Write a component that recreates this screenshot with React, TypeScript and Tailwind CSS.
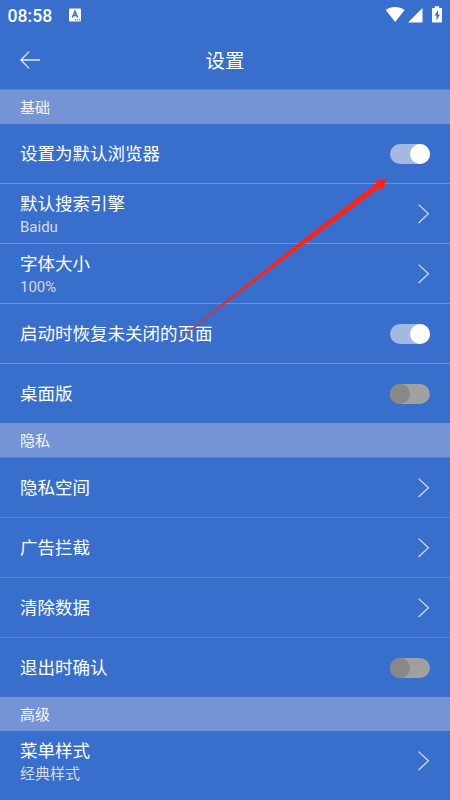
import React from "react";

type RowProps = { title: string; sub?: string; on?: boolean; last?: boolean; faint?: boolean };

function Chevron() {
  return (
    <svg className="h-5 w-3" viewBox="0 0 12 20" fill="none" stroke="#d3e0f6" strokeWidth="1.2">
      <path d="M0.6 0.6 10.4 9.8 0.6 19" />
    </svg>
  );
}

function Toggle({ on }: { on: boolean }) {
  return (
    <span className={`flex h-5 w-10 rounded-full ${on ? "justify-end bg-[#a5b8e2]" : "bg-[#a0a0a0]"}`}>
      <span className={`size-5 rounded-full ${on ? "bg-white" : "bg-[#888888]"}`} />
    </span>
  );
}

function Row({ title, sub, on, last, faint }: RowProps) {
  return (
    <div
      className={`flex shrink-0 items-center justify-between px-5 pt-px ${
        last ? "h-[59px]" : faint ? "h-[60px] border-b border-[#5184d9]" : "h-[60px] border-b border-[#6590dc]"
      }`}
    >
      <div className="flex flex-col">
        <span className="text-[17.5px] leading-6 text-white">{title}</span>
        {sub && <span className="pt-px text-[15px] leading-5 text-[#d6d9df]">{sub}</span>}
      </div>
      {on === undefined ? <Chevron /> : <Toggle on={on} />}
    </div>
  );
}

function Section({ title }: { title: string }) {
  return (
    <div className="flex h-[34px] shrink-0 items-center bg-[#7594d5] px-5 pt-0.5 text-[15px] text-[#f4f6fb]">
      {title}
    </div>
  );
}

export default function App() {
  return (
    <div className="relative flex h-[800px] w-[450px] flex-col overflow-hidden bg-[#386fcd] font-[Roboto,'Noto_Sans_CJK_SC',sans-serif] text-white">
      <div className="flex h-[30px] shrink-0 items-center justify-between pr-2 pl-[7.5px]">
        <div className="flex items-center gap-[16.5px]">
          <span className="w-[45px] pt-px text-[17.6px] leading-[30px] font-medium">08:58</span>
          <svg width="12" height="14" viewBox="0 0 12 14">
            <rect y="0.5" width="12" height="13" rx="1" fill="#fff" />
            <path d="M3.4 9.5 6 3.2 8.6 9.5M4.2 7.6H7.8" fill="none" stroke="#386fcd" strokeWidth="1.5" />
            <path d="M6 11.8H7M8 11.8H9M10 11.8H11" stroke="#386fcd" strokeWidth="1" />
          </svg>
        </div>
        <svg width="57" height="18" viewBox="385 6 57 18" fill="#fff">
          <path d="M385.7 10C390.5 6 399.8 6 404.6 10L395.2 22Z" />
          <path d="M422.5 8V22.5H408Z" />
          <path d="M434.8 6.2H439.2V8H441.2Q442 8 442 8.8V21.7Q442 22.5 441.2 22.5H432.8Q432 22.5 432 21.7V8.8Q432 8 432.8 8H434.8Z" />
          <path d="M438.1 10 434.6 15.6H436.5V20.4L439.9 14.6H438Z" fill="#386fcd" />
        </svg>
      </div>
      <div className="grid h-[60px] shrink-0 grid-cols-[1fr_auto_1fr] items-center border-b border-[#5283d5] px-5 pt-px">
        <svg width="20" height="18" viewBox="0 0 20 18" fill="none" stroke="#e8effb" strokeWidth="1.3">
          <path d="M9.2 0.6.9 9 9.2 17.4M1 9H20" />
        </svg>
        <h1 className="pt-[3px] text-[19.5px]">设置</h1>
      </div>
      <Section title="基础" />
      <Row title="设置为默认浏览器" on={true} />
      <Row title="默认搜索引擎" sub="Baidu" />
      <Row title="字体大小" sub="100%" />
      <Row title="启动时恢复未关闭的页面" on={true} />
      <Row title="桌面版" on={false} last />
      <Section title="隐私" />
      <div className="h-px shrink-0 bg-[#4b7dd2]" />
      <Row title="隐私空间" faint />
      <Row title="广告拦截" faint />
      <Row title="清除数据" faint />
      <Row title="退出时确认" on={false} last />
      <Section title="高级" />
      <Row title="菜单样式" sub="经典样式" last />
      <svg className="absolute inset-0" width="450" height="800" viewBox="0 0 450 800">
        <path d="M387 179 373.5 180.7 376.7 183.2 300 242 165 349.5 304 244.5 380.5 187.3 382 191.5Z" fill="#ff2314" />
      </svg>
    </div>
  );
}
